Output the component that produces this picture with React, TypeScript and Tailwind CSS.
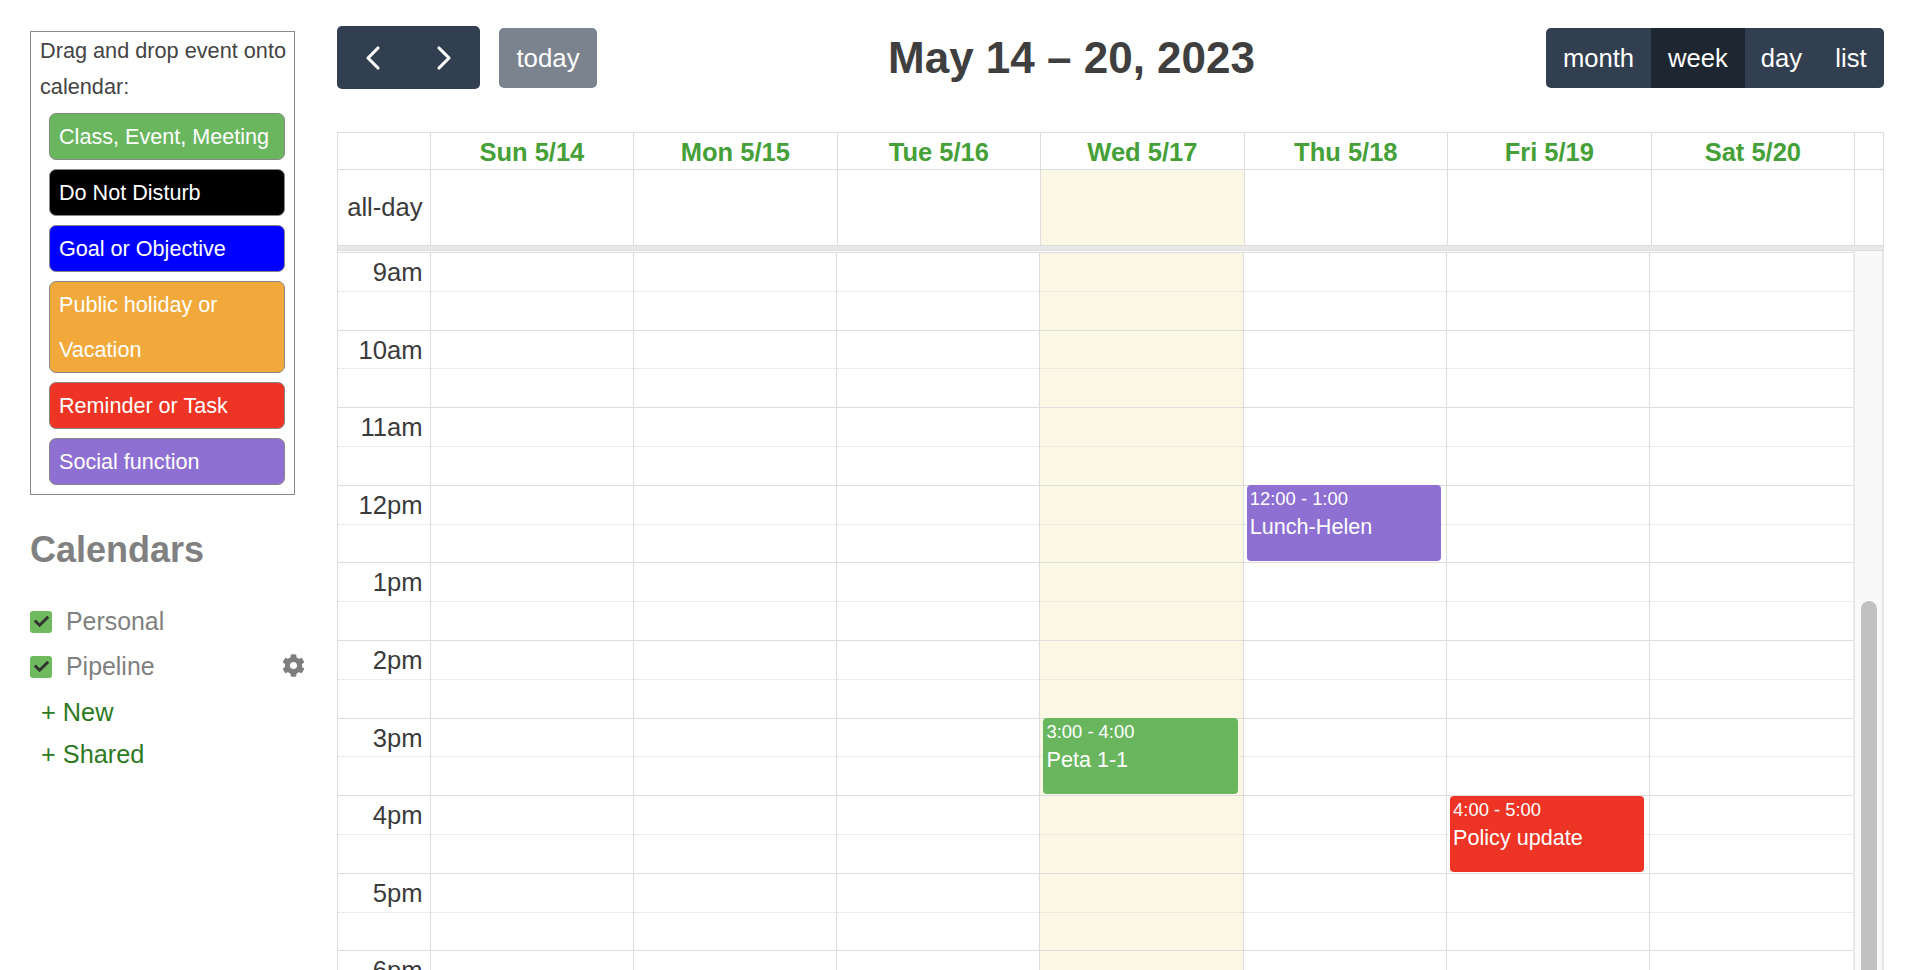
import { ChevronLeft, ChevronRight } from "lucide-react";
import { FaCheck, FaCog } from "react-icons/fa";

const palette = [
  { label: "Class, Event, Meeting", color: "bg-[#6ab65f]" },
  { label: "Do Not Disturb", color: "bg-black" },
  { label: "Goal or Objective", color: "bg-[#0000ff]" },
  { label: "Public holiday or Vacation", color: "bg-[#f2a93b]" },
  { label: "Reminder or Task", color: "bg-[#ee3424]" },
  { label: "Social function", color: "bg-[#8e70d3]" },
];

const days = ["Sun 5/14", "Mon 5/15", "Tue 5/16", "Wed 5/17", "Thu 5/18", "Fri 5/19", "Sat 5/20"];
const hours = ["9am", "10am", "11am", "12pm", "1pm", "2pm", "3pm", "4pm", "5pm", "6pm"];

function CalendarRow({ name, gear }: { name: string; gear?: boolean }) {
  return (
    <div className="flex h-[45px] items-center">
      <span className="flex h-[22px] w-[22px] items-center justify-center rounded-[3px] bg-[#6fb95f] text-[#333]">
        <FaCheck size={15} />
      </span>
      <span className="ml-[14px] flex-1 text-[24.9px] text-[#808080]">{name}</span>
      {gear && <FaCog size={23} className="mr-[-10px] mb-[2px] text-[#7e7e7e]" />}
    </div>
  );
}

function Sidebar() {
  return (
    <aside className="w-[265px] shrink-0 pt-[31px]">
      <div className="border border-[#8a8a8a] pb-[9px] pl-[9px] pr-[1px]">
        <p className="pt-[1px] text-[21.7px] leading-[36px] text-[#444]">Drag and drop event onto calendar:</p>
        <div className="mt-[8px] mr-[8px] flex flex-col gap-[9px] pl-[9px]">
          {palette.map((p) => (
            <div
              key={p.label}
              className={`${p.color} rounded-[7px] border border-[#888] px-[9px] text-[21.6px] leading-[45px] text-white`}
            >
              {p.label}
            </div>
          ))}
        </div>
      </div>
      <h2 className="mt-[33px] text-[36px] leading-[44px] font-bold text-[#808080]">Calendars</h2>
      <div className="mt-[27px]">
        <CalendarRow name="Personal" />
        <CalendarRow name="Pipeline" gear />
      </div>
      <div className="mt-[2px] pl-[11px] text-[25.3px] leading-[42px] text-[#2d7a1e]">
        <div>+ New</div>
        <div>+ Shared</div>
      </div>
    </aside>
  );
}

function Toolbar() {
  return (
    <div className="flex items-center justify-between">
      <div className="flex items-center gap-[19px]">
        <div className="grid h-[63px] w-[143px] grid-cols-2 place-items-center rounded-[5px] bg-[#323f50] text-white">
          <ChevronLeft size={40} strokeWidth={1.9} />
          <ChevronRight size={40} strokeWidth={1.9} />
        </div>
        <div className="flex h-[60px] w-[98px] items-center justify-center rounded-[5px] bg-[#7b838e] pt-[2px] text-[25.8px] text-white">
          today
        </div>
      </div>
      <h1 className="pt-[1px] text-[44px] leading-none font-bold text-[#3f3f3f]">May 14 – 20, 2023</h1>
      <div className="flex h-[60px] items-stretch overflow-hidden rounded-[5px] bg-[#323f50] text-[25.6px] text-white">
        <div className="flex w-[105px] items-center justify-center pt-[2px]">month</div>
        <div className="flex w-[94px] items-center justify-center bg-[#1e2731] pt-[2px]">week</div>
        <div className="flex w-[73px] items-center justify-center pt-[2px]">day</div>
        <div className="flex w-[66px] items-center justify-center pt-[2px]">list</div>
      </div>
    </div>
  );
}

function Event({ top, time, title, color }: { top: string; time: string; title: string; color: string }) {
  return (
    <div className={`absolute left-[3px] right-[5px] h-[76px] rounded-[4px] pl-[3px] pt-[2px] text-white ${top} ${color}`}>
      <div className="text-[18.4px] leading-[24px]">{time}</div>
      <div className="text-[21.6px] leading-[32px]">{title}</div>
    </div>
  );
}

function Slots({ label }: { label?: boolean }) {
  return (
    <>
      {hours.map((h) => (
        <div key={h}>
          <div className="h-[38.8px] border-t border-[#ddd] pr-[7px] text-right text-[25.6px] leading-[38px] text-[#3b3b3b]">
            {label ? h : ""}
          </div>
          <div className="h-[38.8px] border-t border-dotted border-[#ddd]" />
        </div>
      ))}
    </>
  );
}

function Calendar() {
  return (
    <div className="mt-[43px] border-x border-t border-[#ddd]">
      <div className="grid h-[37px] grid-cols-[91.6px_repeat(7,203.5px)_1fr] border-b border-[#ddd]">
        <div />
        {days.map((d) => (
          <div key={d} className="border-l border-[#ddd] text-center text-[25.5px] leading-[38px] font-bold text-[#45a037]">
            {d}
          </div>
        ))}
        <div className="border-l border-[#ddd]" />
      </div>
      <div className="grid h-[75px] grid-cols-[91.6px_repeat(7,203.5px)_1fr]">
        <div className="pr-[7px] text-right text-[25.6px] leading-[75px] text-[#3b3b3b]">all-day</div>
        {days.map((d) => (
          <div key={d} className={`border-l border-[#ddd] ${d === "Wed 5/17" ? "bg-[#faf7e4]" : ""}`} />
        ))}
        <div className="border-l border-[#ddd]" />
      </div>
      <div className="h-[6px] border-y border-[#ddd] bg-[#e8e8e8]" />
      <div className="flex">
        <div className="grid flex-1 grid-cols-[91.6px_repeat(7,203.3px)] pt-[1px]">
          <div>
            <Slots label />
          </div>
          {days.map((d) => (
            <div key={d} className={`relative border-l border-[#ddd] ${d === "Wed 5/17" ? "bg-[#faf7e4]" : ""}`}>
              <Slots />
              {d === "Wed 5/17" && <Event top="top-[466px]" time="3:00 - 4:00" title="Peta 1-1" color="bg-[#6ab65f]" />}
              {d === "Thu 5/18" && <Event top="top-[233px]" time="12:00 - 1:00" title="Lunch-Helen" color="bg-[#8e70d3]" />}
              {d === "Fri 5/19" && <Event top="top-[544px]" time="4:00 - 5:00" title="Policy update" color="bg-[#ee3424]" />}
            </div>
          ))}
        </div>
        <div className="relative w-[31px] shrink-0 border-x-2 border-l-[#e9e9e9] border-r-[#e6e6e6] bg-[#f9f9f9]">
          <div className="absolute left-[6px] top-[350px] h-[600px] w-[16px] rounded-full bg-[#c1c1c1]" />
        </div>
      </div>
    </div>
  );
}

export default function App() {
  return (
    <div className="flex h-[970px] overflow-hidden bg-white pl-[30px] font-['Liberation_Sans',Arial,sans-serif]">
      <Sidebar />
      <main className="ml-[42px] w-[1547px] pt-[26px]">
        <Toolbar />
        <Calendar />
      </main>
    </div>
  );
}
